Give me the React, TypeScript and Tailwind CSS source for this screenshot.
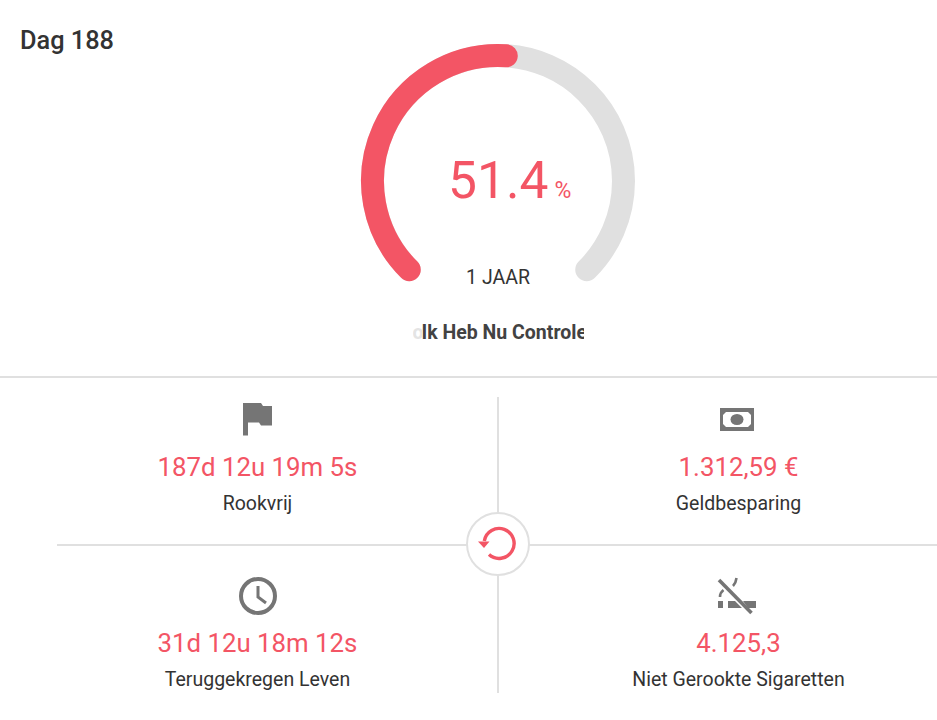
const RED = "#f35565";

// 270 degree gauge, angles measured clockwise from 12 o'clock
function polar(deg: number, r: number) {
	const a = (deg * Math.PI) / 180;
	return `${(140 + r * Math.sin(a)).toFixed(2)} ${(140 - r * Math.cos(a)).toFixed(2)}`;
}

function arc(from: number, to: number, r: number) {
	const large = to - from > 180 ? 1 : 0;
	return `M${polar(from, r)} A${r} ${r} 0 ${large} 1 ${polar(to, r)}`;
}

function Gauge({ percent }: { percent: number }) {
	const end = -135 + (270 * percent) / 100;
	return (
		<div className="relative h-[260px] w-[280px]">
			<svg width="280" height="260" viewBox="0 0 280 260" fill="none">
				<path d={arc(-135, 135, 125.5)} stroke="#e0e0e0" strokeWidth="23" strokeLinecap="round" />
				<path d={arc(-135, end, 125.5)} stroke={RED} strokeWidth="23" strokeLinecap="round" />
			</svg>
			<div className="absolute top-[110px] left-[90px] flex items-baseline whitespace-nowrap text-[#f35565]">
				<span className="text-[51.5px] leading-[60px]">{percent}</span>
				<span className="ml-[6px] text-[23px] leading-[60px]">%</span>
			</div>
			<div className="absolute top-[225px] left-0 w-full text-center text-[19.5px] leading-[24px] text-[#333333]">
				1 JAAR
			</div>
		</div>
	);
}

function FlagIcon() {
	return (
		<svg width="30" height="33" viewBox="0 0 30 33" fill="#757575">
			<path d="M0 0H18L20 3H29V22.5H18L16 19.5H5V32.5H0Z" />
		</svg>
	);
}

function MoneyIcon() {
	return (
		<svg className="mr-[3px]" width="34" height="23" viewBox="0 0 34 23">
			<path fill="#757575" d="M0 0H34V23H0Z" />
			<path fill="#ffffff" d="M6 4H28L31 7V16L28 19H6L3 16V7Z" />
			<ellipse cx="17" cy="11.5" rx="6.5" ry="5.5" fill="#757575" />
		</svg>
	);
}

function ClockIcon() {
	return (
		<svg width="38" height="38" viewBox="0 0 38 38" fill="none" stroke="#757575">
			<circle cx="19" cy="19" r="17" strokeWidth="4" />
			<path d="M19 9V20L27 26" strokeWidth="3" />
		</svg>
	);
}

function NoSmokeIcon() {
	return (
		<svg className="mr-[3px]" width="40" height="38" viewBox="0 0 40 38" fill="none">
			<path d="M2 3L34.5 36" stroke="#757575" strokeWidth="3.6" />
			<path fill="#757575" d="M1 24H6V31H1ZM11 24H18L25 31H11ZM26 24H39V31H31Z" />
			<path d="M16 9C18 7 19 5 19.5 1" stroke="#757575" strokeWidth="2.6" />
			<path d="M3 20C3 17 4.5 14.5 6.5 13" stroke="#757575" strokeWidth="2.6" />
		</svg>
	);
}

function RestoreIcon() {
	return (
		<svg width="40" height="40" viewBox="0 0 40 40" fill="none">
			<path d="M11 30.5A15 15 0 1 0 6.3 17" stroke={RED} strokeWidth="3.4" />
			<path d="M0 17.5H11.5L6 24Z" fill={RED} />
		</svg>
	);
}

function Stat({ icon, value, label, iconPad }: { icon: React.ReactNode; value: string; label: string; iconPad: string }) {
	return (
		<div className={`flex h-[147px] flex-col items-center ${iconPad}`}>
			<div className="flex h-[40px] items-center justify-center">{icon}</div>
			<div className="mt-[12px] text-[25.8px] leading-[32px] whitespace-nowrap text-[#f35565]">{value}</div>
			<div className="mt-[8px] text-[19.5px] leading-[26px] whitespace-nowrap text-[#333333]">{label}</div>
		</div>
	);
}

export default function App() {
	return (
		<div className="h-[720px] w-[937px] overflow-hidden bg-white font-['Roboto',sans-serif]">
			<div className="h-[378px] border-b-2 border-[#e0e0e0]">
				<div className="ml-[18px] grid w-[960px] grid-cols-[1fr_280px_1fr]">
					<div className="pt-[25px] pl-[2px] text-[25.3px] leading-[32px] font-medium text-[#333333]">Dag 188</div>
					<div className="flex flex-col items-center pt-[41px]">
						<Gauge percent={51.4} />
						<div className="mt-[20px] flex h-[24px] w-[171px] overflow-hidden text-[19.5px] leading-[24px] font-bold whitespace-nowrap text-[#424242]">
							<div className="w-[9px] shrink-0 overflow-hidden text-[#e4e4e4]">ol</div>
							<div>Ik Heb Nu Controle</div>
						</div>
					</div>
					<div />
				</div>
			</div>

			<div className="relative ml-[18px] w-[960px] pt-[19px]">
				<div className="grid grid-cols-[481px_479px]">
					<div className="border-r-2 border-[#e0e0e0]">
						<Stat icon={<FlagIcon />} value="187d 12u 19m 5s" label="Rookvrij" iconPad="pt-[2px]" />
					</div>
					<Stat icon={<MoneyIcon />} value="1.312,59 €" label="Geldbesparing" iconPad="pt-[2px]" />
					<div className="col-span-2 ml-[39px] h-[2px] bg-[#e0e0e0]" />
					<div className="border-r-2 border-[#e0e0e0]">
						<Stat icon={<ClockIcon />} value="31d 12u 18m 12s" label="Teruggekregen Leven" iconPad="pt-[30px]" />
					</div>
					<Stat icon={<NoSmokeIcon />} value="4.125,3" label="Niet Gerookte Sigaretten" iconPad="pt-[30px]" />
				</div>
				<div className="absolute top-[134px] left-[448px] flex h-[64px] w-[64px] items-center justify-center rounded-full border-2 border-[#e0e0e0] bg-white">
					<RestoreIcon />
				</div>
			</div>
		</div>
	);
}
